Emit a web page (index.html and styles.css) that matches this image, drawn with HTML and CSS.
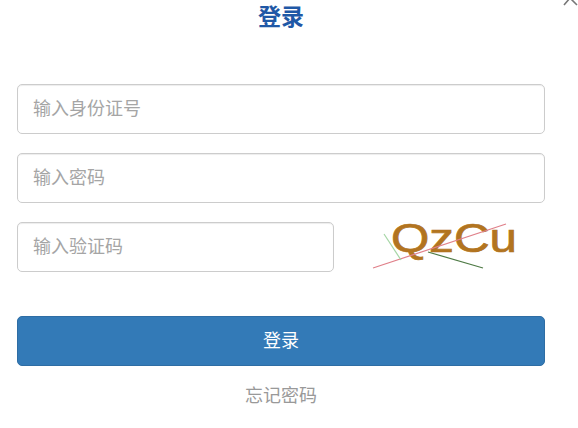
FILE: index.html
```html
<!DOCTYPE html>
<html lang="zh-CN">
<head>
  <meta charset="UTF-8" />
  <meta name="viewport" content="width=device-width, initial-scale=1.0" />
  <title>登录</title>
  <link rel="stylesheet" href="styles.css">
</head>
<body>
  <div class="login-box">
    <svg class="close" width="18" height="8" viewBox="0 0 18 8">
      <path d="M4 5 L10 -2 L17 5" fill="none" stroke="#777" stroke-width="1.6" />
    </svg>

    <h2 class="title">登录</h2>

    <form class="login-form">
      <input class="field" type="text" placeholder="输入身份证号">
      <input class="field" type="password" placeholder="输入密码">

      <div class="captcha-row">
        <input class="field field-code" type="text" placeholder="输入验证码">
        <svg class="captcha" width="170" height="56" viewBox="0 -6 170 56">
          <text x="31" y="30" class="captcha-text" textLength="126" lengthAdjust="spacingAndGlyphs">QzCu</text>
          <path d="M13 46 L146 2" stroke="#e0808a" stroke-width="1.2" fill="none" />
          <path d="M24 12 L41 38" stroke="#a5d6a5" stroke-width="1.2" fill="none" />
          <path d="M68 30 L123 46" stroke="#4e7a45" stroke-width="1.2" fill="none" />
        </svg>
      </div>

      <button class="btn-login" type="button">登录</button>
    </form>

    <a class="forgot" href="#">忘记密码</a>
  </div>
</body>
</html>
```

FILE: styles.css
```css
* {
  margin: 0;
  padding: 0;
  box-sizing: border-box;
}

body {
  background-color: white;
  font-family: "Liberation Sans", "Noto Sans CJK SC", sans-serif;
  overflow: hidden;
}

.login-box {
  position: relative;
  height: 428px;
  padding: 0 33px 0 17px;
}

.close {
  position: absolute;
  top: 0;
  right: 0;
}

.title {
  height: 84px;
  padding-top: 3px;
  text-align: center;
  font-size: 23px;
  line-height: 29px;
  font-weight: bold;
  color: #1f58a6;
}

.login-form {
  display: flex;
  flex-direction: column;
  gap: 19px;
}

.field {
  display: block;
  width: 100%;
  height: 50px;
  padding: 0 15px;
  border: 1px solid #ccc;
  border-radius: 5px;
  background-color: white;
  font-family: inherit;
  font-size: 18px;
  color: #555;
  box-shadow: inset 0 1px 1px rgba(0, 0, 0, 0.075);
}

.field::placeholder {
  color: #a5a5a5;
  opacity: 1;
}

.captcha-row {
  display: flex;
  align-items: flex-start;
  gap: 26px;
}

.field-code {
  width: 317px;
  flex: none;
}

.captcha {
  flex: none;
  margin-top: -6px;
}

.captcha-text {
  font-family: "Liberation Sans", sans-serif;
  font-size: 40px;
  fill: #b27420;
  stroke: #b27420;
  stroke-width: 0.7;
}

.btn-login {
  height: 50px;
  margin-top: 25px;
  padding-bottom: 4px;
  border: 1px solid #2e6da4;
  border-radius: 5px;
  background-color: #337ab7;
  font-family: inherit;
  font-size: 18px;
  color: white;
}

.forgot {
  display: block;
  margin-top: 18px;
  text-align: center;
  font-size: 18px;
  line-height: 24px;
  color: #999;
  text-decoration: none;
}
```
